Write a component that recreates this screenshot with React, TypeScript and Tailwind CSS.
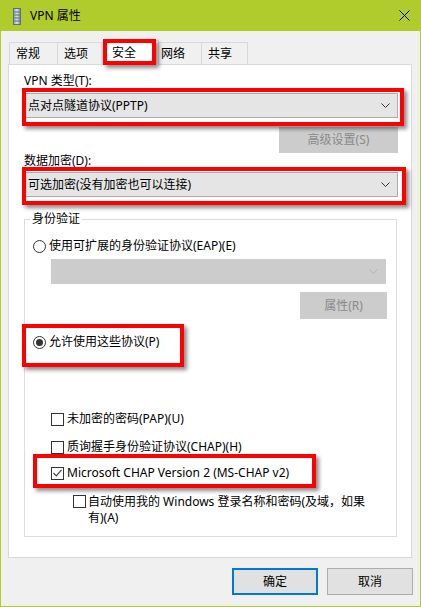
import type { ReactNode } from "react";

const FONT = "font-['Noto_Sans','Noto_Sans_CJK_SC',sans-serif]";

function Chevron({ color = "#333333" }: { color?: string }) {
  return (
    <svg width="9" height="5" viewBox="0 0 9 5" className="shrink-0">
      <polyline points="0.5,0.5 4.5,4.5 8.5,0.5" fill="none" stroke={color} strokeWidth="1" />
    </svg>
  );
}

function Combo({ text, disabled, className }: { text?: string; disabled?: boolean; className: string }) {
  return (
    <div
      className={
        "flex items-center justify-between h-[25px] border pl-[3px] pr-[7px] " +
        (disabled ? "bg-[#cccccc] border-[#cccccc]" : "bg-[#e5e5e5] border-[#acacac]") +
        " " +
        className
      }
    >
      <span className="leading-[16px]">{text}</span>
      <Chevron color={disabled ? "#b4b4b4" : "#333333"} />
    </div>
  );
}

function Radio({ checked, children }: { checked?: boolean; children: ReactNode }) {
  return (
    <div className="flex items-center h-[16px] gap-[3px]">
      <span className="w-[13px] h-[13px] rounded-full border border-[#333333] bg-white flex items-center justify-center">
        {checked && <span className="w-[7px] h-[7px] rounded-full bg-[#333333]" />}
      </span>
      <span className="leading-[16px]">{children}</span>
    </div>
  );
}

function Check({ checked }: { checked?: boolean }) {
  return (
    <span className="w-[13px] h-[13px] shrink-0 border border-[#333333] bg-white flex items-center justify-center">
      {checked && (
        <svg width="9" height="8" viewBox="0 0 9 8">
          <polyline points="0.5,4 3.3,6.8 8.5,0.8" fill="none" stroke="#444444" strokeWidth="1.2" />
        </svg>
      )}
    </span>
  );
}

function Mark({ className }: { className: string }) {
  return (
    <div
      className={
        "absolute z-20 border-[4px] border-[#ff0000] shadow-[3px_3px_4px_rgba(0,0,0,0.45)] pointer-events-none " +
        className
      }
    />
  );
}

export default function App() {
  return (
    <div className={"relative w-[421px] h-[607px] bg-[#b0cb2c] flex flex-col text-[12px] text-black " + FONT}>
      {/* title bar */}
      <div className="h-[31px] flex items-center pl-[13px] pr-[11px] shrink-0">
        <svg width="8" height="17" viewBox="0 0 8 17" className="mt-[1px]">
          <defs>
            <linearGradient id="tw" x1="0" x2="1" y1="0" y2="0">
              <stop offset="0" stopColor="#8ea3b3" />
              <stop offset="0.5" stopColor="#d7e2ea" />
              <stop offset="1" stopColor="#6f8597" />
            </linearGradient>
          </defs>
          <rect x="0.5" y="0.5" width="7" height="16" fill="url(#tw)" stroke="#5d7080" strokeWidth="1" />
          <line x1="1" y1="4" x2="7" y2="4" stroke="#5d7080" />
          <line x1="1" y1="7" x2="7" y2="7" stroke="#5d7080" />
          <line x1="1" y1="10" x2="7" y2="10" stroke="#5d7080" />
          <line x1="1" y1="13" x2="7" y2="13" stroke="#5d7080" />
        </svg>
        <span className="ml-[9px] leading-[16px]">VPN 属性</span>
        <svg width="11" height="11" viewBox="0 0 11 11" className="ml-auto">
          <path d="M0.5 0.5 L10.5 10.5 M10.5 0.5 L0.5 10.5" stroke="#000000" strokeWidth="1" />
        </svg>
      </div>

      {/* body */}
      <div className="flex-1 mx-[1px] mb-[1px] bg-[#f0f0f0] flex flex-col">
        {/* tabs */}
        <div className="flex items-end h-[33px] pl-[8px]">
          <div className="w-[49px] h-[22px] border border-b-0 border-[#d9d9d9] pl-[6px] leading-[21px]">常规</div>
          <div className="w-[44px] h-[22px] border-t border-r border-[#d9d9d9] pl-[6px] leading-[21px]">选项</div>
          <div className="relative z-10 -mb-px w-[57px] h-[25px] border border-b-0 border-[#d9d9d9] bg-white pl-[9px] leading-[24px]">
            安全
          </div>
          <div className="w-[43px] h-[22px] border-t border-r border-[#d9d9d9] pl-[2px] leading-[21px]">网络</div>
          <div className="w-[46px] h-[22px] border-t border-r border-[#d9d9d9] pl-[6px] leading-[21px]">共享</div>
        </div>

        {/* panel */}
        <div className="ml-[7px] w-[404px] h-[494px] border border-[#d9d9d9] bg-white flex flex-col pl-[15px]">
          <div className="mt-[8px] leading-[16px]">VPN 类型(T):</div>
          <Combo text="点对点隧道协议(PPTP)" className="mt-[4px] w-[374px]" />
          <div className="mt-[9px] ml-[255px] w-[119px] h-[26px] bg-[#cccccc] border border-[#cccccc] flex items-center justify-center text-[#8a8a8a]">
            高级设置(S)
          </div>
          <div className="mt-0 leading-[16px]">数据加密(D):</div>
          <Combo text="可选加密(没有加密也可以连接)" className="mt-[3px] w-[374px]" />

          {/* group box */}
          <div className="relative mt-[22px] w-[373px] h-[318px] border border-[#dcdcdc] flex flex-col">
            <span className="absolute -top-[9px] left-[5px] bg-white px-[2px] leading-[16px]">身份验证</span>
            <div className="mt-[18px] ml-[8px]">
              <Radio>使用可扩展的身份验证协议(EAP)(E)</Radio>
            </div>
            <Combo disabled className="mt-[5px] ml-[26px] w-[335px]" />
            <div className="mt-[8px] ml-[275px] w-[87px] h-[27px] bg-[#cccccc] border border-[#cccccc] flex items-center justify-center text-[#8a8a8a]">
              属性(R)
            </div>
            <div className="mt-[15px] ml-[8px]">
              <Radio checked>允许使用这些协议(P)</Radio>
            </div>

            <div className="mt-[61px] ml-[26px] flex items-center h-[16px] gap-[3px]">
              <Check />
              <span className="leading-[16px]">未加密的密码(PAP)(U)</span>
            </div>
            <div className="mt-[12px] ml-[26px] flex items-center h-[16px] gap-[3px]">
              <Check />
              <span className="leading-[16px]">质询握手身份验证协议(CHAP)(H)</span>
            </div>
            <div className="mt-[10px] ml-[26px] flex items-center h-[16px] gap-[3px]">
              <Check checked />
              <span className="leading-[16px]">Microsoft CHAP Version 2 (MS-CHAP v2)</span>
            </div>
            <div className="mt-[13px] ml-[48px] flex items-start gap-[2px]">
              <span className="mt-[1px]">
                <Check />
              </span>
              <span className="leading-[16px]">
                自动使用我的 Windows 登录名称和密码(及域，如果
                <br />
                有)(A)
              </span>
            </div>
          </div>
        </div>

        {/* buttons */}
        <div className="mt-[10px] flex justify-end gap-[9px] pr-[7px]">
          <div className="w-[86px] h-[27px] bg-[#e1e1e1] border-2 border-[#0078d7] flex items-center justify-center">
            确定
          </div>
          <div className="w-[86px] h-[27px] bg-[#e1e1e1] border border-[#adadad] flex items-center justify-center">
            取消
          </div>
        </div>
      </div>

      {/* annotation boxes */}
      <Mark className="left-[103px] top-[39px] w-[53px] h-[26px]" />
      <Mark className="left-[22px] top-[88px] w-[382px] h-[38px]" />
      <Mark className="left-[22px] top-[167px] w-[384px] h-[38px]" />
      <Mark className="left-[22px] top-[324px] w-[162px] h-[43px]" />
      <Mark className="left-[33px] top-[454px] w-[283px] h-[34px]" />
    </div>
  );
}
